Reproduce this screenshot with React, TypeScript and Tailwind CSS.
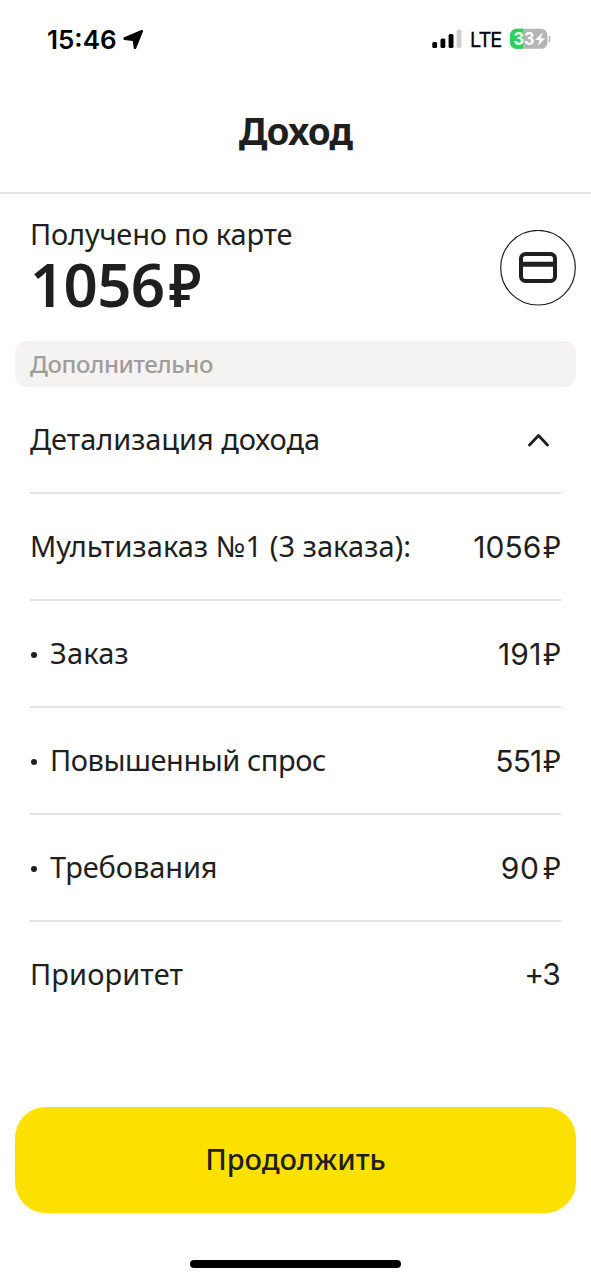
import React from "react";

type Row = { label: string; value: string; bullet?: boolean; ruble?: boolean; labelClass: string; valueClass: string };

const rows: Row[] = [
    { label: "Мультизаказ №1 (3 заказа):", value: "1056", ruble: true, labelClass: "tracking-[0.06px]", valueClass: "tracking-[0.1px]" },
    { label: "Заказ", value: "191", bullet: true, ruble: true, labelClass: "tracking-[0.2px]", valueClass: "tracking-[0.2px]" },
    { label: "Повышенный спрос", value: "551", bullet: true, ruble: true, labelClass: "tracking-[-0.45px]", valueClass: "tracking-[-0.8px]" },
    { label: "Требования", value: "90", bullet: true, ruble: true, labelClass: "tracking-[-0.1px]", valueClass: "tracking-[0.6px] mr-0.5" },
    { label: "Приоритет", value: "+3", labelClass: "tracking-[0.1px]", valueClass: "tracking-[-1.7px] mr-0.5" },
];

const StatusBar: React.FC = () => {
    return (
        <div className="flex h-[78px] items-center justify-between pl-[47px] pr-10 text-black">
            <div className="flex items-center">
                <span className="font-['Inter',sans-serif] text-[26px] font-semibold">15:46</span>
                <svg className="ml-1.5" width="21" height="21" viewBox="0 0 21 21">
                    <path d="M1.200 8.200 18.300 1.100c1.200-.5 2.100.4 1.600 1.600l-6.700 16.500c-.6 1.400-2.400 1.100-2.500-.3L9.800 12 1.500 10.900C.1 10.700-.1 8.800 1.200 8.200Z" />
                </svg>
            </div>
            <div className="flex items-center">
                <svg width="30" height="20" viewBox="0 0 30 20">
                    <rect x="0.300" y="13" width="4.800" height="6" rx="1.500" />
                    <rect x="8.500" y="9.500" width="4.800" height="9.500" rx="1.500" />
                    <rect x="16.600" y="5" width="4.900" height="14" rx="1.500" />
                    <rect x="24.600" y="0.800" width="4.900" height="18.200" rx="1.500" fill="#cfcfcf" />
                </svg>
                <span className="ml-2 mt-0.5 w-[31px] font-['Inter',sans-serif] text-[20px] tracking-[-1px] [-webkit-text-stroke:0.3px_#000]">LTE</span>
                <svg className="ml-[9px]" width="41" height="22" viewBox="0 0 41 22">
                    <defs>
                        <clipPath id="battery">
                            <rect x="0" y="0.800" width="37.500" height="20" rx="6.500" />
                        </clipPath>
                    </defs>
                    <g clipPath="url(#battery)">
                        <rect width="38" height="22" fill="#b4b4b4" />
                        <rect width="13" height="22" fill="#30d158" />
                    </g>
                    <path d="M38.800 7.500c2.300 1 2.300 6 0 7Z" fill="#b4b4b4" />
                    <text x="3.500" y="17.300" fill="#fff" fontSize="18" fontWeight="700" fontFamily="Inter, sans-serif" textLength="21" lengthAdjust="spacingAndGlyphs">33</text>
                    <path d="M32.500 4.500 25 12h4.500l-1.600 6 7.300-7.800h-4.500Z" fill="#fff" />
                </svg>
            </div>
        </div>
    );
};

const App: React.FC = () => {
    return (
        <div className="flex h-[1280px] w-full flex-col overflow-hidden bg-white font-['Noto_Sans',sans-serif] text-[#1f1f1f]">
            <StatusBar />
            <div className="flex h-[116px] items-center justify-center border-b-2 border-[#e4e4e4] pb-2">
                <h1 className="text-[37px] font-bold tracking-[-0.8px]">Доход</h1>
            </div>

            <div className="flex h-[147px] items-start justify-between pl-[30px] pr-[15px]">
                <div className="flex flex-col pt-5">
                    <span className="text-[29px] leading-10 tracking-[-0.2px]">Получено по карте</span>
                    <span className="flex text-[60px] leading-[60px] font-semibold">
                        <span className="tracking-[-0.7px]">1056</span>
                        <span className="ml-[5px] origin-left scale-x-[0.91]">₽</span>
                    </span>
                </div>
                <div className="mt-[35px] flex h-[77px] w-[76px] items-center justify-center">
                    <svg width="76" height="76" viewBox="0 0 76 76" fill="none" stroke="#1f1f1f">
                        <circle cx="38" cy="37.700" r="37.300" strokeWidth="1.200" />
                        <rect x="21" y="24" width="34" height="27" rx="4.500" strokeWidth="4" />
                        <path d="M21 34.200h34" strokeWidth="5" />
                    </svg>
                </div>
            </div>

            <div className="mx-[15px] flex h-[46px] items-center rounded-[12px] bg-[#f4f3f1] px-[15px] pb-px">
                <span className="text-[24px] font-medium tracking-[-0.4px] text-[#9e9d9b]">Дополнительно</span>
            </div>

            <div className="mx-[30px] flex h-[107px] items-center justify-between border-b-2 border-[#e3e3e3] pr-3">
                <span className="-mt-0.5 text-[29px] tracking-[-0.05px]">Детализация дохода</span>
                <svg width="21" height="14" viewBox="0 0 21 14" fill="none" stroke="#1f1f1f" strokeWidth="2.800" strokeLinecap="round" strokeLinejoin="round">
                    <path d="M1.500 12 10.500 2.500 19.500 12" />
                </svg>
            </div>
            <div className="mx-[30px] flex flex-col">
                {rows.map((row) => (
                    <div key={row.label} className="flex h-[107px] items-center justify-between border-b-2 border-[#e3e3e3] last:border-transparent">
                        <div className="-mt-0.5 flex items-center">
                            {row.bullet && <span className="mt-1 mr-[13px] ml-px h-1.5 w-1.5 rounded-full bg-[#1f1f1f]"></span>}
                            <span className={`text-[29px] ${row.labelClass}`}>{row.label}</span>
                        </div>
                        <div className="flex items-baseline">
                            <span className={`font-['Inter',sans-serif] text-[30px] ${row.valueClass}`}>{row.value}</span>
                            {row.ruble && <span className="ml-0.5 text-[30px]">₽</span>}
                        </div>
                    </div>
                ))}
            </div>

            <div className="mt-auto flex flex-col items-center px-[15px] pb-3">
                <button className="h-[106px] w-full rounded-[31px] bg-[#fce000] pb-0.5 text-[29px] font-medium">Продолжить</button>
                <div className="mt-[47px] h-2 w-[211px] rounded-full bg-black"></div>
            </div>
        </div>
    );
};

export default App;
